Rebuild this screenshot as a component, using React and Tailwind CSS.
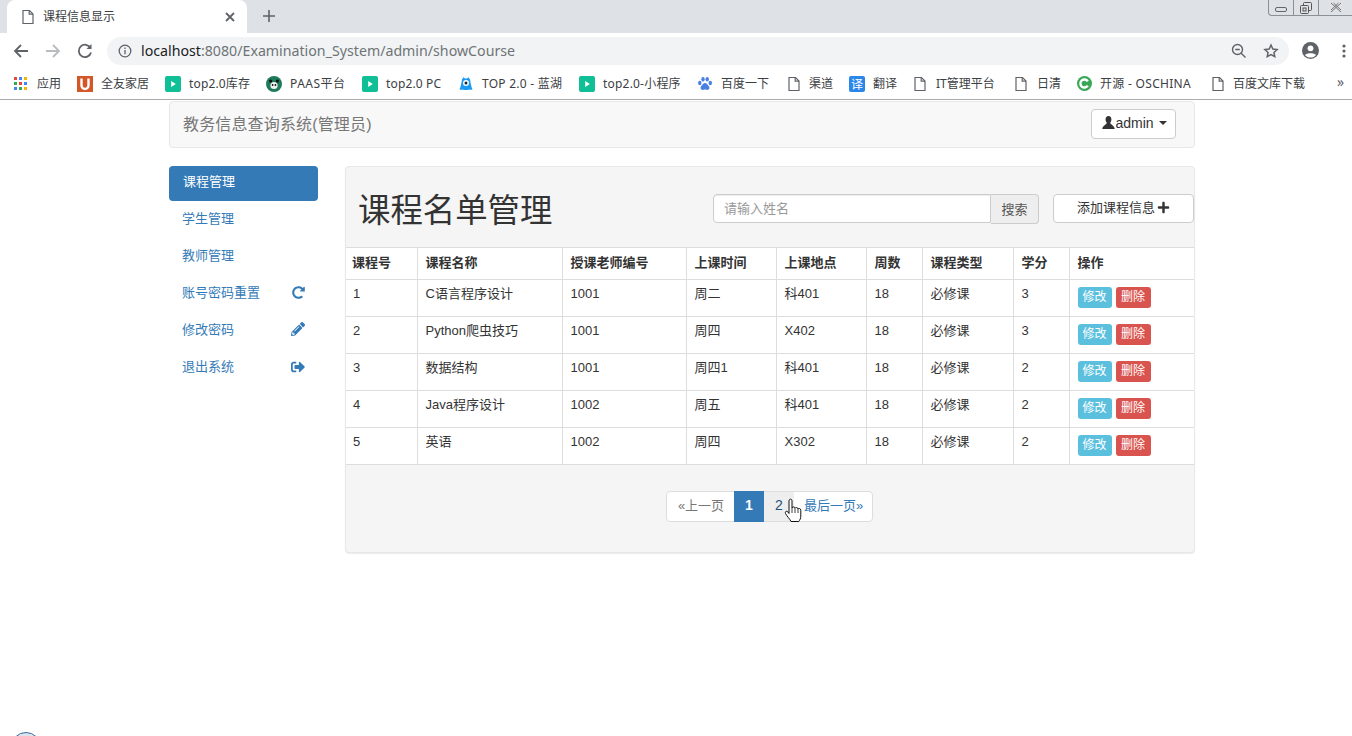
import React from "react";
import { FaPlus, FaPencilAlt, FaSignOutAlt, FaRedoAlt } from "react-icons/fa";

const ui = "font-['Noto_Sans','Noto_Sans_CJK_SC',sans-serif]";

function Doc({ className = "" }) {
  return (
    <svg width="14" height="16" viewBox="0 0 14 16" fill="none" stroke="#5f6368" strokeWidth="1.2" className={"shrink-0 " + className}>
      <path d="M2 1.5h6.5L12 5v9.5H2z" />
      <path d="M8.2 1.5V5.2H12" />
    </svg>
  );
}
function Play() {
  return (
    <svg width="16" height="16" viewBox="0 0 16 16" className="shrink-0">
      <rect width="16" height="16" rx="2" fill="#10bf95" />
      <path d="M6.2 5l4.6 3-4.6 3z" fill="#fff" />
    </svg>
  );
}
function Apps() {
  const c = ["#e8453c", "#4285f4", "#f4b400", "#34a853", "#e8453c", "#4285f4", "#4285f4", "#34a853", "#f4b400"];
  return (
    <svg width="13" height="13" viewBox="0 0 13 13" className="shrink-0">
      {c.map((f, i) => (
        <rect key={i} x={(i % 3) * 5} y={Math.floor(i / 3) * 5} width="3" height="3" fill={f} />
      ))}
    </svg>
  );
}
function ULogo() {
  return (
    <svg width="16" height="16" viewBox="0 0 16 16" className="shrink-0">
      <rect width="16" height="16" fill="#d4572a" />
      <path d="M4.5 2.5v7a3.5 3.5 0 0 0 7 0v-7" fill="none" stroke="#fff" strokeWidth="2.4" />
    </svg>
  );
}
function Panda() {
  return (
    <svg width="16" height="16" viewBox="0 0 16 16" className="shrink-0">
      <circle cx="8" cy="8" r="8" fill="#1d7a5a" />
      <circle cx="8" cy="9.5" r="3.6" fill="#f1f1f1" />
      <circle cx="4.600" cy="5" r="1.6" fill="#111" />
      <circle cx="11.400" cy="5" r="1.6" fill="#111" />
      <circle cx="6.6" cy="9" r="0.9" fill="#111" />
      <circle cx="9.4" cy="9" r="0.9" fill="#111" />
    </svg>
  );
}
function Lanhu() {
  return (
    <svg width="16" height="16" viewBox="0 0 16 16" className="shrink-0">
      <path d="M4 3.5L5.5 1.2 7 2.4h2l1.5-1.2L12 3.5c.6 3 1 7 2.5 10-1.5.8-3-.2-3.3-.1-1 .9-5.4.9-6.4 0-.3-.1-1.8.9-3.3.1C3 10.5 3.4 6.5 4 3.5z" fill="#1a9af0" />
      <circle cx="8" cy="7" r="3" fill="#fff" />
      <circle cx="8" cy="7" r="1.5" fill="#10243e" />
    </svg>
  );
}
function Paw() {
  return (
    <svg width="16" height="16" viewBox="0 0 16 16" fill="#4a80e0" className="shrink-0">
      <ellipse cx="2.8" cy="7" rx="1.7" ry="2.2" />
      <ellipse cx="6" cy="3.2" rx="1.7" ry="2.3" />
      <ellipse cx="10.2" cy="3.2" rx="1.7" ry="2.3" />
      <ellipse cx="13.3" cy="7" rx="1.7" ry="2.2" />
      <path d="M8 7c-2 0-2.5 2-3.7 3-1.3 1.1-.8 4 1.5 4 1 0 1.4-.4 2.2-.4s1.3.4 2.3.4c2.3 0 2.7-2.9 1.4-4C10.5 9 10 7 8 7z" />
    </svg>
  );
}
function Yi() {
  return (
    <div className="w-4 h-4 shrink-0 rounded-[2px] bg-[#2b86ea] text-white text-[12px] leading-4 text-center font-['Noto_Sans_CJK_SC',sans-serif]">译</div>
  );
}
function Osc() {
  return (
    <svg width="15" height="15" viewBox="0 0 15 15" className="shrink-0">
      <circle cx="7.5" cy="7.5" r="7.5" fill="#3aa757" />
      <path d="M10.8 5.4A4 4 0 1 0 10.8 9.6" fill="none" stroke="#fff" strokeWidth="2.4" />
    </svg>
  );
}

const bookmarks = [
  { w: "w-[63px] ml-[14px]", icon: <Apps />, t: "应用", g: "gap-[10px]" },
  { w: "w-[88px]", icon: <ULogo />, t: "全友家居", g: "gap-[8px]" },
  { w: "w-[101px] tracking-[0.15px]", icon: <Play />, t: "top2.0库存", g: "gap-[8px]" },
  { w: "w-[96px] tracking-[0.5px]", icon: <Panda />, t: "PAAS平台", g: "gap-[8px]" },
  { w: "w-[96px] tracking-[0.15px]", icon: <Play />, t: "top2.0 PC", g: "gap-[8px]" },
  { w: "w-[121px] tracking-[0.25px]", icon: <Lanhu />, t: "TOP 2.0 - 蓝湖", g: "gap-[8px]" },
  { w: "w-[118px] tracking-[0.2px]", icon: <Play />, t: "top2.0-小程序", g: "gap-[8px]" },
  { w: "w-[90px]", icon: <Paw />, t: "百度一下", g: "gap-[8px]" },
  { w: "w-[62px]", icon: <Doc />, t: "渠道", g: "gap-[8px]" },
  { w: "w-[64px]", icon: <Yi />, t: "翻译", g: "gap-[8px]" },
  { w: "w-[101px]", icon: <Doc />, t: "IT管理平台", g: "gap-[9px]" },
  { w: "w-[63px]", icon: <Doc />, t: "日清", g: "gap-[9px]" },
  { w: "w-[134px] tracking-[0.3px]", icon: <Osc />, t: "开源 - OSCHINA", g: "gap-[8px]" },
  { w: "w-[120px]", icon: <Doc />, t: "百度文库下载", g: "gap-[8px]" },
];

function Chrome() {
  return (
    <div className={ui}>
      <div className="h-[33px] bg-[#dee1e6] flex relative">
        <div className="ml-[7px] w-[240px] bg-white rounded-t-[8px] flex items-center pl-[14px] pr-[11px]">
          <Doc />
          <span className="ml-[8px] text-[12px] text-[#3c4043] flex-1">课程信息显示</span>
          <svg width="12" height="12" viewBox="0 0 12 12" stroke="#5f6368" strokeWidth="1.8"><path d="M2 2l8 8M10 2l-8 8" /></svg>
        </div>
        <svg width="14" height="14" viewBox="0 0 14 14" stroke="#5f6368" strokeWidth="1.6" className="ml-[15px] mt-[9px]"><path d="M7 1v12M1 7h12" /></svg>
        <div className="absolute right-0 top-0 w-[84px] h-[16px] border border-t-0 border-r-0 border-[#8b8f96] rounded-bl-[4px] flex">
          <div className="w-[25px] border-r border-[#8b8f96] flex items-center justify-center">
            <div className="w-[12px] h-[5px] border border-[#666] rounded-[2px] mt-[3px]"></div>
          </div>
          <div className="w-[25px] border-r border-[#8b8f96] flex items-center justify-center">
            <svg width="12" height="12" viewBox="0 0 12 12" fill="none" stroke="#555"><rect x="3.5" y="0.5" width="8" height="8" rx="1" /><rect x="0.5" y="3.5" width="8" height="8" rx="1" fill="#dee1e6" /><rect x="3" y="6" width="3" height="3" /></svg>
          </div>
          <div className="flex-1 flex items-center justify-center">
            <svg width="12" height="11" viewBox="0 0 12 11" fill="none" stroke="#777"><path d="M1 1l10 9M11 1L1 10M3.5 1l7.5 7M8.5 1L1 8" /></svg>
          </div>
        </div>
      </div>
      <div className="h-[33px] bg-white flex items-center pt-[2px]">
        <svg width="16" height="16" viewBox="0 0 16 16" fill="none" stroke="#5f6368" strokeWidth="1.8" className="ml-[13px]"><path d="M15 8H2M8 2L2 8l6 6" /></svg>
        <svg width="16" height="16" viewBox="0 0 16 16" fill="none" stroke="#b9bcc0" strokeWidth="1.8" className="ml-[16px]"><path d="M1 8h13M8 2l6 6-6 6" /></svg>
        <svg width="16" height="16" viewBox="0 0 16 16" fill="none" stroke="#5f6368" strokeWidth="1.8" className="ml-[16px]"><path d="M13.5 5A6.2 6.2 0 1 0 14 9.5" /><path d="M14.5 1v5h-5z" fill="#5f6368" stroke="none" /></svg>
        <div className="ml-[14px] w-[1182px] h-[28px] bg-[#f1f3f4] rounded-[14px] flex items-center pl-[11px] pr-[10px]">
          <svg width="14" height="14" viewBox="0 0 14 14" fill="none" stroke="#5f6368" strokeWidth="1.3"><circle cx="7" cy="7" r="5.8" /><path d="M7 6v4.2M7 3.5V5" /></svg>
          <span className="ml-[9px] text-[14.2px] text-[#202124]">localhost<span className="text-[#6f7377]">:8080/Examination_System/admin/showCourse</span></span>
          <svg width="16" height="16" viewBox="0 0 16 16" fill="none" stroke="#5f6368" strokeWidth="1.4" className="ml-auto"><circle cx="6.5" cy="6.5" r="5" /><path d="M10.2 10.2l4.3 4.3M4.2 6.5h4.6" /></svg>
          <svg width="16" height="16" viewBox="0 0 24 24" fill="none" stroke="#5f6368" strokeWidth="2.2" className="ml-[16px]"><path d="M12 3l2.7 6 6.5.7-4.8 4.4 1.3 6.4L12 17.3l-5.7 3.2 1.3-6.4-4.8-4.4L9.3 9z" /></svg>
        </div>
        <svg width="17" height="17" viewBox="0 0 17 17" className="ml-[13px]"><circle cx="8.5" cy="8.5" r="8.5" fill="#5f6368" /><circle cx="8.5" cy="6.3" r="2.9" fill="#fff" /><path d="M3 13c1.5-2.5 9.5-2.5 11 0-1.5 2-3.5 2.5-5.5 2.5S4.5 15 3 13z" fill="#fff" /></svg>
        <svg width="4" height="14" viewBox="0 0 4 14" fill="#5f6368" className="ml-[23px]"><circle cx="2" cy="2" r="1.6" /><circle cx="2" cy="7" r="1.6" /><circle cx="2" cy="12" r="1.6" /></svg>
      </div>
      <div className="h-[33px] bg-white flex items-center relative pt-[2px]">
        {bookmarks.map((b, i) => (
          <div key={i} className={"flex items-center shrink-0 whitespace-nowrap text-[12px] text-[#3c4043] " + b.w + " " + b.g}>
            {b.icon}
            <span>{b.t}</span>
          </div>
        ))}
        <span className="absolute left-[1337px] top-[7px] text-[14px] text-[#5f6368] leading-[18px]">»</span>
      </div>
      <div className="h-[1px] bg-[#a9abae]"></div>
    </div>
  );
}

const side = [
  ["课程管理", null],
  ["学生管理", null],
  ["教师管理", null],
  ["账号密码重置", <FaRedoAlt className="text-[13px] -mt-[2px]" />],
  ["修改密码", <FaPencilAlt className="text-[14px] -mt-[2px]" />],
  ["退出系统", <FaSignOutAlt className="text-[14px] -mt-[1px]" />],
];

const rows = [
  ["1", "C语言程序设计", "1001", "周二", "科401", "18", "必修课", "3"],
  ["2", "Python爬虫技巧", "1001", "周四", "X402", "18", "必修课", "3"],
  ["3", "数据结构", "1001", "周四1", "科401", "18", "必修课", "2"],
  ["4", "Java程序设计", "1002", "周五", "科401", "18", "必修课", "2"],
  ["5", "英语", "1002", "周四", "X302", "18", "必修课", "2"],
];
const heads = ["课程号", "课程名称", "授课老师编号", "上课时间", "上课地点", "周数", "课程类型", "学分", "操作"];
const widths = ["w-[71px]", "w-[145px]", "w-[124px]", "w-[90px]", "w-[90px]", "w-[56px]", "w-[91px]", "w-[56px]", "w-[125px]"];

function UserIcon() {
  return (
    <svg width="13" height="13" viewBox="0 0 13 13" fill="#333" className="shrink-0 mb-[2px]">
      <ellipse cx="6.5" cy="3.6" rx="2.9" ry="3.6" />
      <path d="M4.8 6.8C4.8 8.5 0.5 9.5 0.3 13h12.4C12.5 9.5 8.2 8.5 8.2 6.800z" />
    </svg>
  );
}

function Main() {
  return (
    <div className="w-[1026px] ml-[169px] text-[13px] text-[#333] font-['Liberation_Sans','Noto_Sans_CJK_SC',sans-serif]">
      <div className="mt-[1px] h-[47px] bg-[#f8f8f8] border border-[#e7e7e7] rounded-[4px] flex items-center justify-between pl-[13px] pr-[18px]">
        <span className="text-[16px] tracking-[0.15px] text-[#777]">教务信息查询系统(管理员)</span>
        <button className="w-[85px] h-[30px] bg-white border border-[#ccc] rounded-[4px] flex items-center justify-center text-[14px] text-[#333] mb-[1px] pb-[2px] pl-[2px]">
          <UserIcon />admin
          <span className="ml-[5px] w-0 h-0 border-x-[4px] border-x-transparent border-t-[4px] border-t-[#333]"></span>
        </button>
      </div>
      <div className="flex mt-[18px] items-start">
        <nav className="w-[149px] shrink-0">
          {side.map(([t, ic], i) => (
            <div
              key={t}
              className={
                i === 0
                  ? "h-[35px] mb-[2px] rounded-[4px] bg-[#337ab7] text-white flex items-center px-[14px] pb-[3px]"
                  : "h-[35px] mb-[2px] rounded-[4px] text-[#337ab7] flex items-center justify-between pl-[13px] pr-[13px] pb-[3px]"
              }
            >
              <span>{t}</span>
              {ic}
            </div>
          ))}
        </nav>
        <section className="ml-[27px] w-[850px] h-[387px] bg-[#f5f5f5] border border-[#e8e8e8] rounded-[4px] shadow-[0_1px_1px_rgba(0,0,0,0.08)]">
          <div className="h-[80px] flex items-start relative">
            <h1 className="ml-[12px] mt-[21px] text-[32.4px] leading-[47px] text-[#333] font-normal">课程名单管理</h1>
            <div className="absolute left-[367px] top-[27px] flex">
              <div className="w-[278px] h-[29px] bg-white border border-[#ccc] rounded-l-[4px] pl-[10px] text-[#999] leading-[28px] shadow-[inset_0_1px_1px_rgba(0,0,0,0.075)]">请输入姓名</div>
              <div className="w-[48px] h-[30px] bg-[#eee] border border-[#ccc] border-l-0 rounded-r-[4px] text-center text-[#555] leading-[30px]">搜索</div>
            </div>
            <div className="absolute left-[707px] top-[27px] w-[141px] h-[29px] bg-white border border-[#ccc] rounded-[4px] flex items-center justify-center text-[#333] gap-[2px] pb-[2px]">
              添加课程信息 <FaPlus className="text-[13px]" />
            </div>
          </div>
          <table className="w-[848px] table-fixed border-collapse bg-white">
            <thead>
              <tr className="h-[32px]">
                {heads.map((h, i) => (
                  <th key={h} className={"border border-[#ddd] border-l-0 last:border-r-0 text-left font-bold pb-[2px] " + (i === 0 ? "pl-[6px] " : "pl-[8px] ") + widths[i]}>{h}</th>
                ))}
              </tr>
            </thead>
            <tbody>
              {rows.map((r) => (
                <tr key={r[0]} className="h-[37px]">
                  {r.map((c, i) => (
                    <td key={i} className={"border border-[#ddd] border-l-0 align-top pt-[5px] leading-[18px] " + (i === 0 ? "pl-[7px]" : "pl-[8px]")}>{c}</td>
                  ))}
                  <td className="border border-[#ddd] border-l-0 border-r-0 align-top pl-[8px] pt-[7px]">
                    <div className="flex gap-[4px]">
                      <span className="w-[34px] h-[21px] rounded-[3px] bg-[#5bc0de] text-white text-[12px] leading-[21px] text-center">修改</span>
                      <span className="w-[35px] h-[21px] rounded-[3px] bg-[#d9534f] text-white text-[12px] leading-[21px] text-center">删除</span>
                    </div>
                  </td>
                </tr>
              ))}
            </tbody>
          </table>
          <div className="ml-[320px] mt-[26px] flex w-[207px] h-[31px] bg-white border border-[#ddd] rounded-[4px] text-center leading-[27px]">
            <span className="w-[67px] pl-[1px] text-[#777]">«上一页</span>
            <span className="w-[30px] -my-px h-[31px] leading-[29px] bg-[#337ab7] text-white font-bold text-[14px]">1</span>
            <span className="w-[30px] bg-[#eee] text-[#23527c] text-[14px]">2</span>
            <span className="flex-1 pl-[1px] text-[#337ab7]">最后一页»</span>
          </div>
        </section>
      </div>
    </div>
  );
}

export default function App() {
  return (
    <div className="w-[1352px] h-[736px] overflow-hidden relative bg-white">
      <Chrome />
      <Main />
      <svg width="18" height="26" viewBox="0 0 18 26" className="absolute left-[784px] top-[498px]">
        <path d="M5 3c0-2.5 3-2.5 3 0v7c.5-1.5 3-1.5 3 .3.5-1.3 3-1 3 .7.5-1 2.8-.7 2.8 1.2V18c0 2.5-1 4-2 5.500H7C6 21 3 18.500 1.500 15.500c-.8-1.800 1-3 2.300-1.700L5 15.500z" fill="#fff" stroke="#111" strokeWidth="1" />
        <path d="M8 10v5M11 10.500v4.500M14 11v4" stroke="#111" strokeWidth="0.8" />
      </svg>
      <div className="absolute left-[11px] top-[732px] w-[30px] h-[30px] rounded-full bg-[#dbe6f0] border border-[#3d6a99]"></div>
    </div>
  );
}
